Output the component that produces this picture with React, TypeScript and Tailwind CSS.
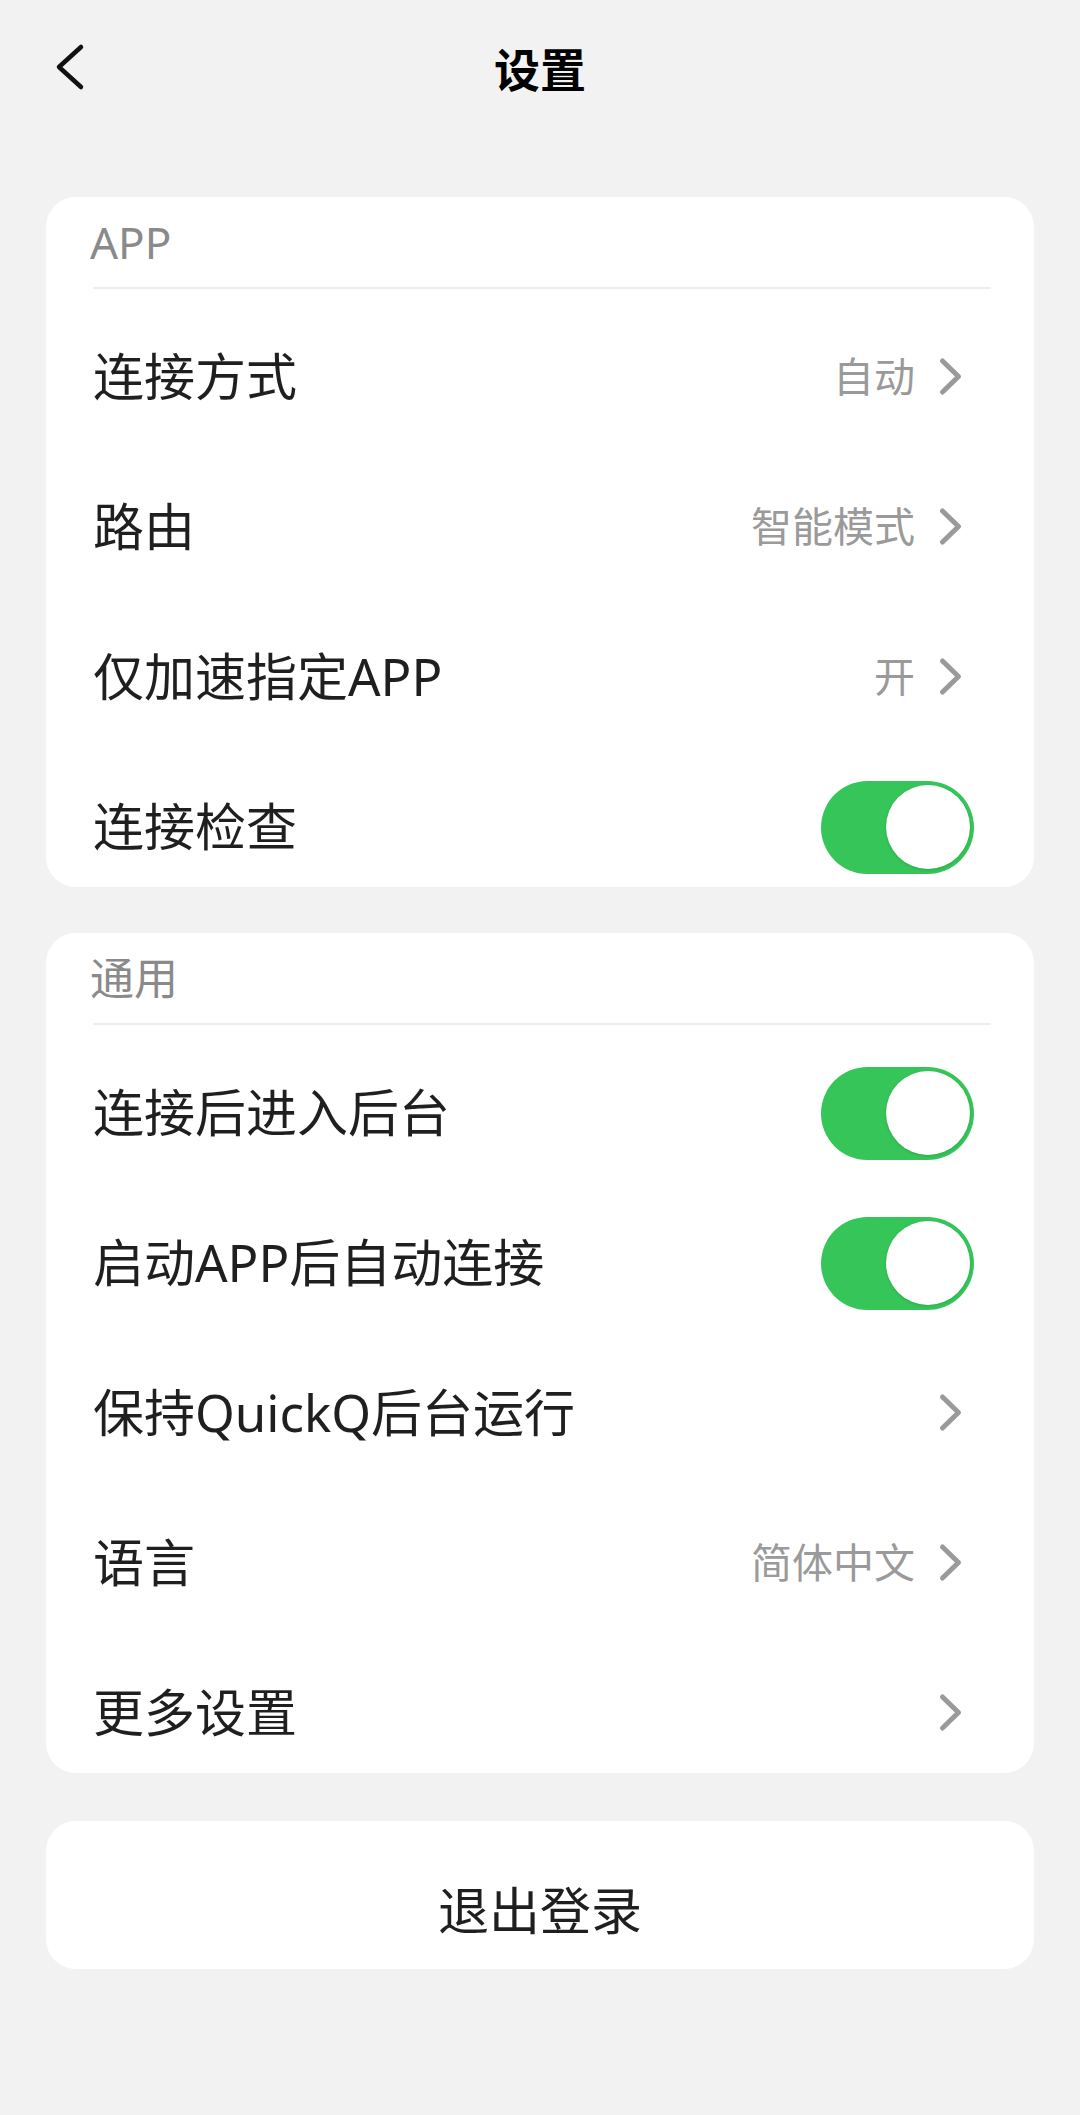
import React, { useState } from "react";

function Chevron() {
    return (
        <svg width="36" height="40" viewBox="0 0 36 40" className="shrink-0">
            <path
                d="M4.5 4 L20.5 19.5 L4.5 35"
                fill="none"
                stroke="#9a9a9a"
                strokeWidth="5"
                strokeLinecap="round"
                strokeLinejoin="round"
            />
        </svg>
    );
}

function Toggle({ on, onChange }: { on: boolean; onChange: () => void }) {
    return (
        <button
            type="button"
            onClick={onChange}
            className={`relative h-[93px] w-[153px] shrink-0 rounded-full transition ${
                on ? "bg-[#35c559]" : "bg-[#e2e2e2]"
            }`}
        >
            <span
                className={`absolute top-[4.5px] h-[84px] w-[84px] rounded-full bg-white shadow-[0_1px_3px_rgba(0,0,0,0.15)] transition-all ${
                    on ? "left-[65px]" : "left-[4.5px]"
                }`}
            />
        </button>
    );
}

type RowProps = {
    label: string;
    value?: string;
    toggle?: boolean;
};

function Row({ label, value, toggle }: RowProps) {
    const [on, setOn] = useState(true);

    return (
        <div className="flex h-[150px] shrink-0 items-center justify-between pl-[47px] pr-[60px]">
            <span className="text-[51px] leading-[1.2] text-[#1f1f1f]">{label}</span>
            {toggle ? (
                <Toggle on={on} onChange={() => setOn(!on)} />
            ) : (
                <div className="flex items-center gap-[23px]">
                    {value && (
                        <span className="text-[41px] leading-[1.2] text-[#9a9a9a]">{value}</span>
                    )}
                    <Chevron />
                </div>
            )}
        </div>
    );
}

function Card({ title, rows, height }: { title: string; rows: RowProps[]; height: string }) {
    return (
        <section className={`mx-[46px] flex flex-col overflow-hidden rounded-[30px] bg-white ${height}`}>
            <div className="flex h-[90px] shrink-0 items-center pl-[44px] text-[44px] leading-[1.2] text-[#8a8a8a]">
                {title}
            </div>
            <div className="ml-[47px] mr-[43px] h-[2px] shrink-0 bg-[#eeeeee]" />
            <div className="flex flex-col pt-[13px]">
                {rows.map((r) => (
                    <Row key={r.label} {...r} />
                ))}
            </div>
        </section>
    );
}

export default function App() {
    return (
        <div className="min-h-[2115px] bg-[#f2f2f2] font-['Noto_Sans','Noto_Sans_CJK_SC',sans-serif]">
            <header className="relative flex h-[140px] items-center justify-center">
                <button type="button" className="absolute left-[50px] top-[40px]">
                    <svg width="40" height="56" viewBox="0 0 40 56">
                        <path
                            d="M31 7 L9 27 L31 47"
                            fill="none"
                            stroke="#111"
                            strokeWidth="4.5"
                            strokeLinecap="round"
                            strokeLinejoin="round"
                        />
                    </svg>
                </button>
                <h1 className="text-[46px] font-bold leading-[1.2] text-black">设置</h1>
            </header>

            <div className="mt-[57px]">
                <Card
                    title="APP"
                    height="h-[690px]"
                    rows={[
                        { label: "连接方式", value: "自动" },
                        { label: "路由", value: "智能模式" },
                        { label: "仅加速指定APP", value: "开" },
                        { label: "连接检查", toggle: true },
                    ]}
                />
            </div>

            <div className="mt-[46px]">
                <Card
                    title="通用"
                    height="h-[840px]"
                    rows={[
                        { label: "连接后进入后台", toggle: true },
                        { label: "启动APP后自动连接", toggle: true },
                        { label: "保持QuickQ后台运行" },
                        { label: "语言", value: "简体中文" },
                        { label: "更多设置" },
                    ]}
                />
            </div>

            <button
                type="button"
                className="mx-[46px] mt-[48px] flex h-[148px] w-[988px] items-center justify-center rounded-[30px] bg-white pt-[32px] text-[51px] leading-[1.2] text-[#1f1f1f]"
            >
                退出登录
            </button>
        </div>
    );
}
